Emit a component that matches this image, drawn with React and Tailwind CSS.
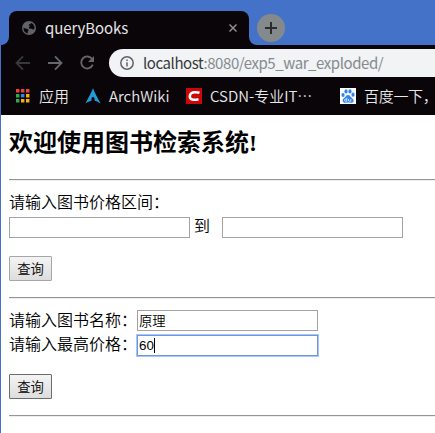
import React from 'react';

const sans = 'font-["Noto_Sans_CJK_SC",sans-serif]';

function Rule({ className = '' }) {
  return <div className={`h-[2px] w-full border-t border-[#959595] bg-[#eeeeee] ${className}`} />;
}

function Field({ children = null, focused = false }) {
  return (
    <div
      className={`flex h-[21px] w-[181px] shrink-0 items-center border bg-white pl-[1px] font-["Liberation_Sans","Noto_Sans_CJK_SC",sans-serif] text-[13.33px] leading-none ${
        focused ? 'border-[#7096d4] shadow-[0_0_0_1px_#a5c7fe]' : 'border-[#a3a3a3]'
      }`}
    >
      {children}
    </div>
  );
}

function QueryButton({ dark = false }) {
  return (
    <button
      className={`flex h-[25px] w-[43px] items-center justify-center rounded-[1px] border bg-linear-to-b from-[#f4f4f4] to-[#dddddd] font-["Noto_Sans_CJK_SC",sans-serif] font-[350] text-[13.33px] leading-none text-black ${
        dark ? 'border-[#6c6c6c]' : 'border-[#a6a6a6]'
      }`}
    >
      查询
    </button>
  );
}

function Globe() {
  return (
    <svg width="14" height="14" viewBox="0 0 14 14" className="shrink-0">
      <circle cx="7" cy="7" r="7" fill="#606467" />
      <path
        d="M1.5 6.4 3.2 7.5 5 7.7 6.7 9.1 5.7 10.7 5.7 12.5C3 11.9 1.2 9.6 1.5 6.4ZM8.8 1.7C11.3 2.5 12.7 4.8 12.5 7.2L11.4 8.7 9.8 7.7 7.2 7.4 6.7 6.2 8.2 5.1 6.6 4.2 7.4 3.1 9 3.2Z"
        fill="#0a0509"
      />
    </svg>
  );
}

function TabStrip() {
  return (
    <div className="flex h-[45px] items-end bg-[#4472c8]">
      <div className="h-[8px] w-[8px] shrink-0 bg-[#0a0509]">
        <div className="h-full w-full rounded-br-[8px] bg-[#4472c8]" />
      </div>
      <div className="flex h-[34px] w-[240px] shrink-0 items-center rounded-t-[8px] bg-[#0a0509] pl-[13px] pr-[12px]">
        <Globe />
        <span className="ml-[9px] flex-1 pb-[2px] text-[15px] leading-none tracking-[-0.1px] text-[#e4e4e5]">queryBooks</span>
        <svg width="8" height="8" viewBox="0 0 8 8" stroke="#8b8d8e" strokeWidth="1.5">
          <path d="M.5 .5 7.5 7.5M7.5 .5 .5 7.5" />
        </svg>
      </div>
      <div className="h-[8px] w-[8px] shrink-0 bg-[#0a0509]">
        <div className="h-full w-full rounded-bl-[8px] bg-[#4472c8]" />
      </div>
      <svg width="28" height="28" viewBox="0 0 28 28" className="mb-[3px] shrink-0">
        <circle cx="14" cy="14" r="14" fill="#848a8c" />
        <path d="M14 8v12M8 14h12" stroke="#292b2d" strokeWidth="2" />
      </svg>
    </div>
  );
}

function Toolbar() {
  return (
    <div className="flex h-[36px] items-center pl-[14px]">
      <svg width="16" height="16" viewBox="0 0 16 16" fill="none" stroke="#39383b" strokeWidth="1.8" className="shrink-0">
        <path d="M15 8H2M8 1.3 1.5 8 8 14.7" />
      </svg>
      <svg width="16" height="16" viewBox="0 0 16 16" fill="none" stroke="#66676a" strokeWidth="1.8" className="ml-[16px] shrink-0">
        <path d="M1 8H14M8 1.3 14.5 8 8 14.7" />
      </svg>
      <svg width="16" height="16" viewBox="0 0 16 16" className="ml-[16px] shrink-0">
        <path d="M13.2 4.1A6 6 0 1 0 13.8 9.7" fill="none" stroke="#66676a" strokeWidth="1.8" />
        <path d="M15 1v6H9Z" fill="#66676a" />
      </svg>
      <div className="ml-[14px] flex h-[28px] flex-1 items-center rounded-l-full bg-[#f1f3f4] pl-[11px]">
        <svg width="14" height="14" viewBox="0 0 14 14" fill="none" stroke="#606468" strokeWidth="1.5" className="shrink-0">
          <circle cx="7" cy="7" r="6.2" />
          <path d="M7 6.2v4.3M7 3.4v1.5" />
        </svg>
        <span className="ml-[9px] whitespace-nowrap pb-[2px] text-[15px] leading-none tracking-[-0.43px] text-[#858a8e]">
          <span className="text-[#36393c]">localhost</span>:8080/exp5_war_exploded/
        </span>
      </div>
    </div>
  );
}

function Bookmarks() {
  return (
    <div className="flex h-[34px] items-center whitespace-nowrap pb-[4px] pl-[15px] text-[15px] font-[350] leading-none text-[#e8e8e9]">
      <svg width="14" height="14" viewBox="0 0 14 14" className="shrink-0">
        <path d="M0 0h3.4v3.4H0zM5 0h3.4v3.4H5zM10 0h3.4v3.4H10z" fill="#ea4335" />
        <path d="M0 5h3.4v3.4H0zM0 10h3.4v3.4H0z" fill="#34a853" />
        <path d="M5 5h3.4v3.4H5z" fill="#2684fc" />
        <path d="M10 5h3.4v3.4H10zM5 10h3.4v3.4H5zM10 10h3.4v3.4H10z" fill="#fbad08" />
      </svg>
      <span className="ml-[9px] w-[46px] shrink-0 pb-[2px]">应用</span>
      <svg width="16" height="16" viewBox="0 0 16 16" className="shrink-0">
        <path
          d="M8 0.3C7 3 5.2 6.7 0.4 15.6 3.4 13.7 5 12.9 6.7 12.5 6.1 10.7 6.7 9 8 9S10.1 10.7 9.4 12.5C11.2 12.9 12.7 13.8 15.7 15.6C12.3 9.4 9.6 4.5 8 0.3Z"
          fill="#249bd8"
        />
      </svg>
      <span className="ml-[8px] w-[77px] shrink-0 pb-[2px]">ArchWiki</span>
      <svg width="16" height="16" viewBox="0 0 16 16" className="shrink-0">
        <rect width="16" height="16" fill="#c90808" />
        <path d="M13.5 4.8C10.8 3.9 4.7 3.4 3.8 7.8C3.1 12 8.2 12.4 12.5 11.2" fill="none" stroke="#fff" strokeWidth="2.5" />
      </svg>
      <span lang="zh-CN" className="ml-[8px] w-[130px] shrink-0 pb-[2px]">CSDN-专业IT…</span>
      <svg width="16" height="16" viewBox="0 0 16 16" className="shrink-0">
        <rect width="16" height="16" fill="#fff" />
        <g fill="#3385ed">
          <ellipse cx="3" cy="7" rx="1.6" ry="2.1" />
          <ellipse cx="6" cy="3.4" rx="1.6" ry="2.1" />
          <ellipse cx="10" cy="3.4" rx="1.6" ry="2.1" />
          <ellipse cx="13" cy="6.7" rx="1.6" ry="2.1" />
          <path d="M8 6.9C5.9 6.9 5.8 9 3.8 10.3C1.5 12 2.7 15.2 5.5 14.8C7.2 14.4 9 14.5 10.5 14.8C13.5 15.3 14.7 12.1 12.4 10.4C10.6 9 10 6.9 8 6.9Z" />
        </g>
        <path d="M6.8 9.7v3.5H5.4c-1.2 0-1.2-2 0-2h1.4M8.5 11v1.3q0 .9 1 .9h1.3V11" fill="none" stroke="#fff" strokeWidth=".7" />
      </svg>
      <span className="ml-[8px] shrink-0 pb-[2px] tracking-[-0.3px]">百度一下，</span>
    </div>
  );
}

export default function App() {
  return (
    <div className="h-[433px] w-[435px] overflow-hidden border-l border-[#4472c8] bg-white">
      <div className={`bg-[#0a0509] ${sans}`}>
        <TabStrip />
        <Toolbar />
        <Bookmarks />
      </div>
      <main className='pl-[8px] font-["Liberation_Serif","Noto_Sans_CJK_SC",serif] text-[16px] font-[350] text-black'>
        <h1 className="flex h-[64px] items-center pb-[8px] text-[24px] font-bold leading-none">欢迎使用图书检索系统!</h1>
        <Rule />
        <div className="mt-[10px] flex h-[24px] items-center leading-none">请输入图书价格区间：</div>
        <div className="mt-[2px] flex h-[21px] items-center leading-none">
          <Field />
          <span className="ml-[4px] w-[28px] shrink-0 pb-[2px]">到</span>
          <Field />
        </div>
        <div className="mt-[18px]">
          <QueryButton />
        </div>
        <Rule className="mt-[16px]" />
        <div className="mt-[11px] flex h-[21px] items-center leading-none">
          <span className="w-[128px] shrink-0">请输入图书名称：</span>
          <Field><span className="pt-[2px]">原理</span></Field>
        </div>
        <div className="mt-[4px] flex h-[21px] items-center leading-none">
          <span className="w-[128px] shrink-0 pb-[2px]">请输入最高价格：</span>
          <Field focused>
            60<span className="h-[15px] w-px bg-black" />
          </Field>
        </div>
        <div className="mt-[18px]">
          <QueryButton dark />
        </div>
        <Rule className="mt-[16px]" />
      </main>
    </div>
  );
}
